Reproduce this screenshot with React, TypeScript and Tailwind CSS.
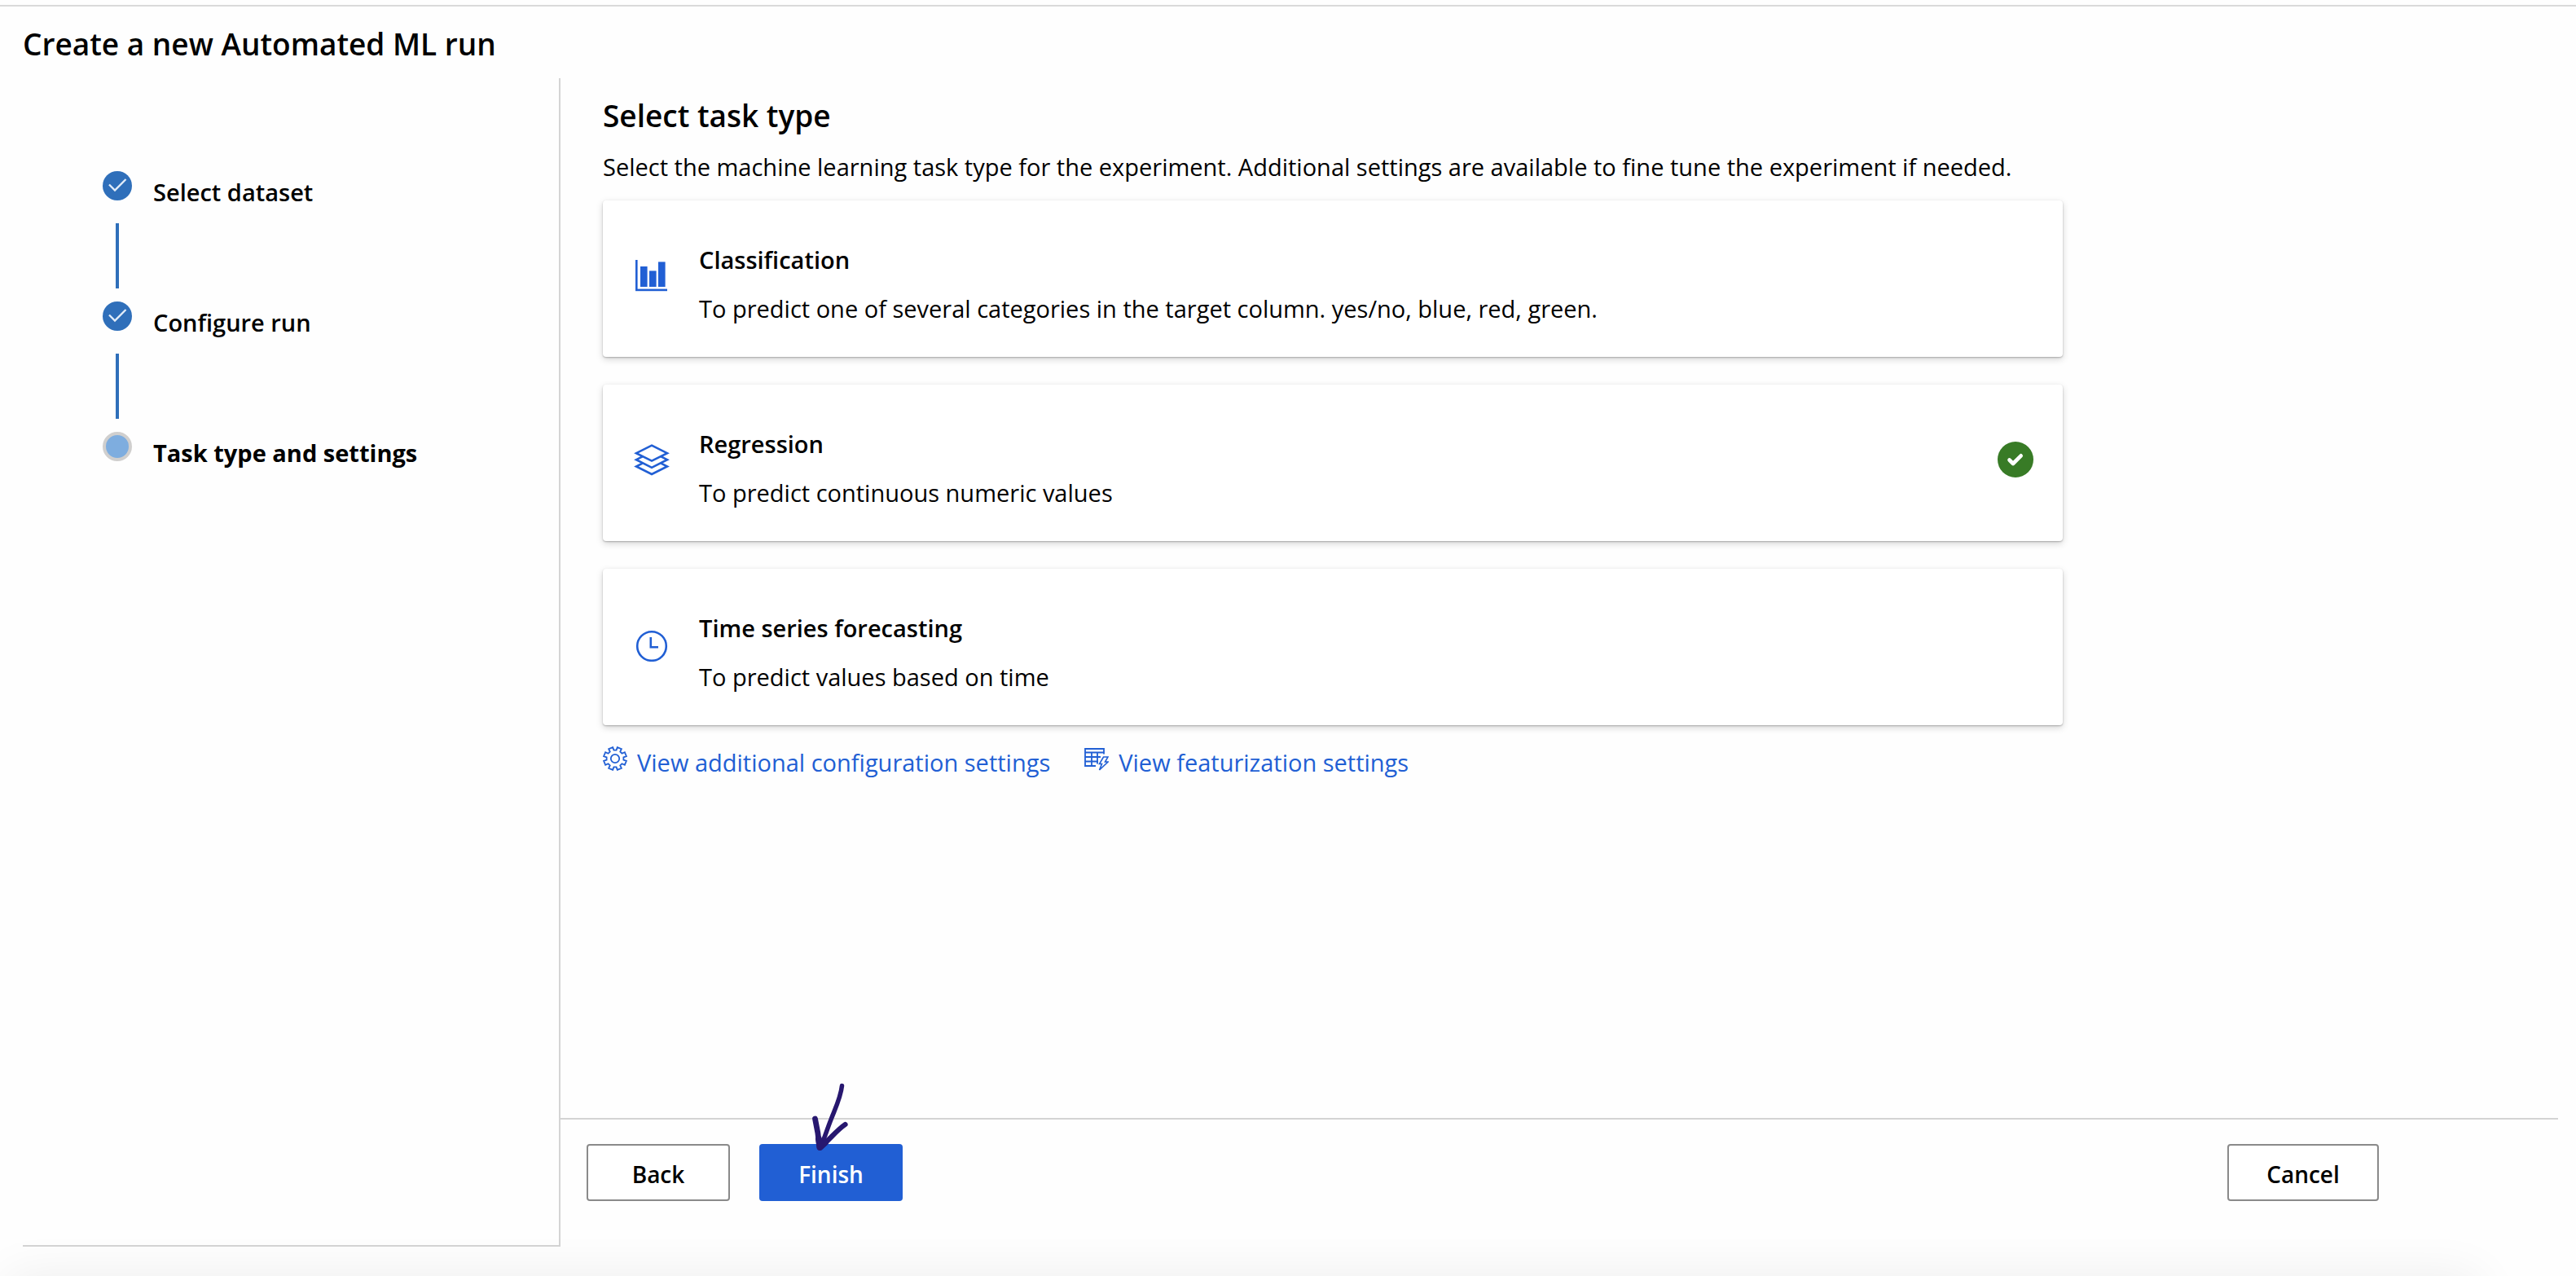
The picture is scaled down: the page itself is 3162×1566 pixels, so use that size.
import { useState, type ReactNode } from "react";

type Task = { id: string; title: string; text: string; icon: ReactNode };

const GEAR_POINTS = Array.from({ length: 8 }, (_, i) => {
  const mid = 22.5 + i * 45;
  return [
    [mid - 14, 10.5],
    [mid - 11, 14.2],
    [mid + 11, 14.2],
    [mid + 14, 10.5],
  ]
    .map(([deg, r]) => {
      const a = (deg * Math.PI) / 180;
      return `${(15 + r * Math.cos(a)).toFixed(2)},${(15 + r * Math.sin(a)).toFixed(2)}`;
    })
    .join(" ");
}).join(" ");

function ChartIcon() {
  return (
    <svg viewBox="0 0 44 44" className="size-11" fill="currentColor" aria-hidden="true">
      <rect x="2" y="3" width="2.6" height="38" />
      <rect x="2" y="38.6" width="39" height="2.6" />
      <rect x="8" y="11" width="8.6" height="25" />
      <rect x="19" y="16.4" width="8.6" height="19.6" />
      <rect x="30" y="5.4" width="8.6" height="30.6" />
    </svg>
  );
}

function LayersIcon() {
  return (
    <svg viewBox="0 0 44 44" className="size-11" fill="none" stroke="currentColor" strokeWidth="2.6" aria-hidden="true">
      <path d="M22 4.6 41 14.2 22 23.6 3 14.2z" />
      <path d="M10.5 18.4 3 22.2 22 31.8l19-9.6-7.5-3.8" />
      <path d="M10.5 26.7 3 30.5 22 40l19-9.5-7.5-3.8" />
    </svg>
  );
}

function ClockIcon() {
  return (
    <svg viewBox="0 0 44 44" className="size-11" fill="none" stroke="currentColor" strokeWidth="2.6" aria-hidden="true">
      <circle cx="22" cy="25" r="17.8" />
      <path d="M20.8 14v12.300H30" />
    </svg>
  );
}

function GearIcon() {
  return (
    <svg viewBox="0 0 30 30" className="size-[30px] shrink-0" fill="none" stroke="currentColor" strokeWidth="1.8" aria-hidden="true">
      <polygon points={GEAR_POINTS} />
      <circle cx="15" cy="15" r="5.2" />
    </svg>
  );
}

function FeaturizeIcon() {
  return (
    <svg viewBox="0 0 30 30" className="size-[30px] shrink-0" fill="none" stroke="currentColor" strokeWidth="1.8" aria-hidden="true">
      <path d="M14 24H1V3h23v6.5M1 7.5h23M1 13h19M1 18.5h16M9 7.5V24M16 7.5v14" />
      <path d="M23.5 13H29l-3.500 6H29L18.500 29l3-7.500h-3z" strokeWidth="1.6" />
    </svg>
  );
}

function StepCheck() {
  return (
    <span className="flex size-9 rounded-full bg-[#2f6fba]">
      <svg viewBox="0 0 36 36" className="size-9" fill="none" stroke="#e3edf9" strokeWidth="2.3" aria-hidden="true">
        <path d="m8 16.5 7 7L28.500 10" />
      </svg>
    </span>
  );
}

const steps = [
  { label: "Select dataset", done: true },
  { label: "Configure run", done: true },
  { label: "Task type and settings", done: false },
];

const tasks: Task[] = [
  {
    id: "classification",
    title: "Classification",
    text: "To predict one of several categories in the target column. yes/no, blue, red, green.",
    icon: <ChartIcon />,
  },
  { id: "regression", title: "Regression", text: "To predict continuous numeric values", icon: <LayersIcon /> },
  { id: "forecasting", title: "Time series forecasting", text: "To predict values based on time", icon: <ClockIcon /> },
];

function TaskCard({ task, selected, onSelect }: { task: Task; selected: boolean; onSelect: () => void }) {
  return (
    <label className="relative flex cursor-pointer items-start gap-9 rounded-[4px] bg-white pr-9 pl-[38px] shadow-[0_3px_8px_rgba(0,0,0,0.17),0_1px_2px_rgba(0,0,0,0.25)]">
      <input type="radio" name="task-type" className="sr-only" checked={selected} onChange={onSelect} />
      <span className="mt-[70px] shrink-0 text-[#215fd4]">{task.icon}</span>
      <span className="flex flex-1 flex-col gap-5 pt-[53px] pb-[39px] text-[29px] leading-10">
        <span className="font-semibold">{task.title}</span>
        <span>{task.text}</span>
      </span>
      {selected && (
        <svg viewBox="0 0 44 44" className="mt-[70px] size-11 shrink-0" fill="none" aria-hidden="true">
          <circle cx="22" cy="22" r="22" fill="#387b26" />
          <path d="m14.5 22.500 4.500 4.500 9.700-9.700" stroke="#fff" strokeWidth="4.6" strokeLinecap="round" strokeLinejoin="round" />
        </svg>
      )}
    </label>
  );
}

export default function App() {
  const [selected, setSelected] = useState("regression");

  return (
    <div className="relative flex min-h-screen flex-col overflow-hidden bg-[#fefefe] pt-1.5 font-['Open_Sans','Noto_Sans',sans-serif] text-black">
      <header className="border-t-2 border-[#dadada] px-7 pt-6 pb-5">
        <h1 className="text-[37px] leading-[44px] font-semibold">Create a new Automated ML run</h1>
      </header>

      <div className="flex flex-1 pr-[22px] pb-9 pl-7">
        <nav aria-label="Wizard steps" className="w-[660px] shrink-0 border-r-2 border-b-2 border-[#d4d4d4] pt-[114px] pl-[98px]">
          <ol>
            {steps.map((step, i) => (
              <li key={step.label} className="flex h-40 items-start gap-[26px]">
                <span className="flex w-9 flex-col items-center gap-7">
                  {step.done ? (
                    <StepCheck />
                  ) : (
                    <span className="size-9 rounded-full border-4 border-[#d0cfce] bg-[#7eaddf]" />
                  )}
                  {i < steps.length - 1 && <span className="h-20 w-1 bg-[#2f6fba]" />}
                </span>
                <span
                  aria-current={step.done ? undefined : "step"}
                  className={
                    step.done
                      ? "pt-1.5 text-[29px] leading-10 font-semibold"
                      : "pt-1.5 text-[29px] leading-10 font-bold"
                  }
                >
                  {step.label}
                </span>
              </li>
            ))}
          </ol>
        </nav>

        <div className="flex min-w-0 flex-1 flex-col">
          <main className="flex-1 pt-6 pl-[52px]">
            <h2 className="text-[37px] leading-[44px] font-semibold">Select task type</h2>
            <p className="mt-[21px] text-[29px] leading-10">
              Select the machine learning task type for the experiment. Additional settings are available to fine tune
              the experiment if needed.
            </p>
            <div role="radiogroup" aria-label="Task type" className="mt-[21px] flex max-w-[1792px] flex-col gap-[34px]">
              {tasks.map((task) => (
                <TaskCard
                  key={task.id}
                  task={task}
                  selected={task.id === selected}
                  onSelect={() => setSelected(task.id)}
                />
              ))}
            </div>
            <div className="mt-[26px] flex gap-[42px] text-[29px] leading-10 text-[#215fd4]">
              <a href="#configuration" className="flex items-start gap-3">
                <GearIcon />
                View additional configuration settings
              </a>
              <a href="#featurization" className="flex items-start gap-3">
                <FeaturizeIcon />
                View featurization settings
              </a>
            </div>
          </main>

          <footer className="flex gap-9 border-t-2 border-[#d4d4d4] pt-[30px] pr-[220px] pb-14 pl-8 text-[28px] leading-10 font-semibold">
            <button type="button" className="h-[70px] w-44 rounded-[4px] border-2 border-[#8a8a8a] bg-white pt-1">
              Back
            </button>
            <div className="relative">
              <button type="button" className="h-[70px] w-44 rounded-[4px] bg-[#215fd4] pt-1 text-white">
                Finish
              </button>
              <svg
                viewBox="0 0 60 100"
                className="pointer-events-none absolute -top-20 left-14 h-[100px] w-[60px]"
                fill="none"
                stroke="#27176f"
                strokeLinecap="round"
                strokeLinejoin="round"
                aria-hidden="true"
              >
                <path d="M45.5 8.500C44 23 37 37 32 50 28 60 25 70 20 82" strokeWidth="5.5" />
                <path d="M12.5 49C15 60 17 72 18 84" strokeWidth="6.8" />
                <path d="M49.5 56C39 63 31 74 19 84" strokeWidth="6.2" />
                <path d="M17 74 18.500 84l6.500-6" strokeWidth="8" />
              </svg>
            </div>
            <button type="button" className="ml-auto h-[70px] w-[186px] rounded-[4px] border-2 border-[#8a8a8a] bg-white pt-1">
              Cancel
            </button>
          </footer>
        </div>
      </div>

      <div className="pointer-events-none absolute top-full right-[120px] left-2.5 h-20 shadow-[0_0_60px_rgba(0,0,0,0.07)]" />
    </div>
  );
}
